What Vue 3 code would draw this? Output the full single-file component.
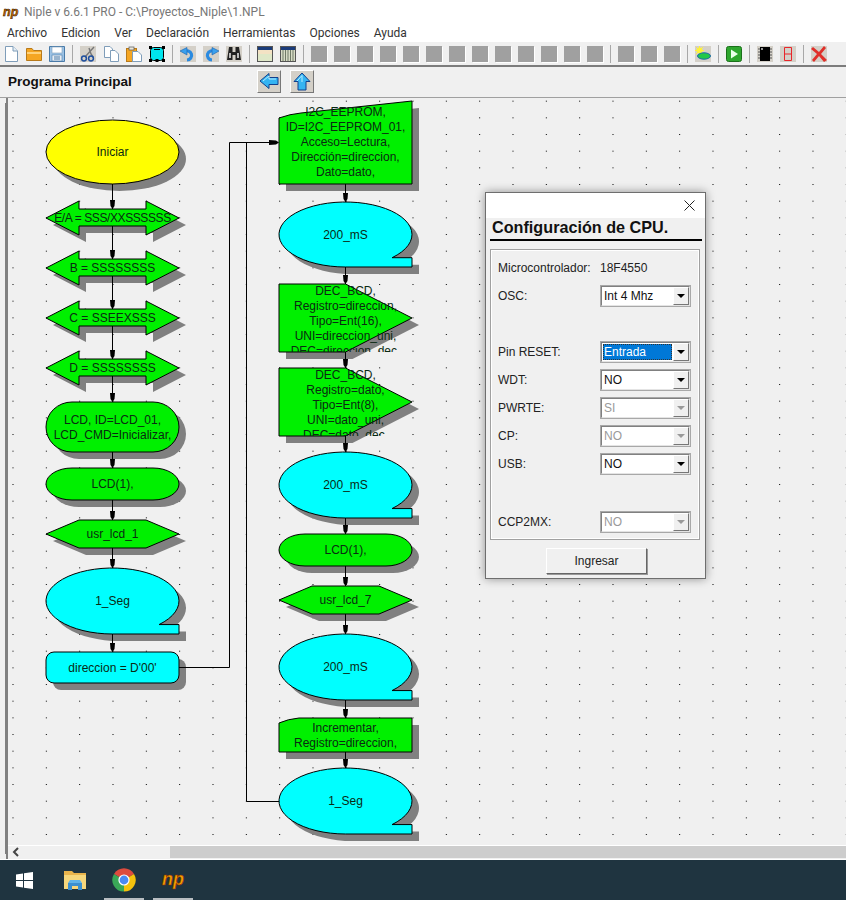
<script setup>
const menus = ['Archivo', 'Edicion', 'Ver', 'Declaración', 'Herramientas', 'Opciones', 'Ayuda']

const gray = n => Array(n).fill('gray')
const tools = [
	'new', 'open', 'save', '|',
	'cut', 'copy', 'paste', 'block', '|',
	'undo', 'redo', 'find', '|',
	'win', 'cols', '|',
	...gray(13), '|',
	...gray(3), '|',
	'weather', '|',
	'play', '|',
	'chip', 'seg', '|',
	'close'
]

const YELLOW = '#ffff00'
const GREEN = '#00f000'
const CYAN = '#00ffff'

// chart coordinates are the same as page coordinates (svg viewBox is offset)
const L = 46
const R = 279
const W = 133

const shapes = [
	{ t: 'ellipse', x: L, y: 120, h: 64, fill: YELLOW, lines: ['Iniciar'] },
	{ t: 'dbl', x: L, y: 201, h: 34, fill: GREEN, tight: true, lines: ['E/A = SSS/XXSSSSSS'] },
	{ t: 'dbl', x: L, y: 251, h: 34, fill: GREEN, lines: ['B = SSSSSSSS'] },
	{ t: 'dbl', x: L, y: 301, h: 34, fill: GREEN, lines: ['C = SSEEXSSS'] },
	{ t: 'dbl', x: L, y: 351, h: 34, fill: GREEN, lines: ['D = SSSSSSSS'] },
	{ t: 'round', x: L, y: 402, h: 50, r: 26, fill: GREEN, lines: ['LCD, ID=LCD_01,', 'LCD_CMD=Inicializar,'] },
	{ t: 'round', x: L, y: 468, h: 32, r: 26, fill: GREEN, lines: ['LCD(1),'] },
	{ t: 'hex', x: L, y: 520, h: 28, fill: GREEN, lines: ['usr_lcd_1'] },
	{ t: 'tail', x: L, y: 568, h: 66, fill: CYAN, lines: ['1_Seg'] },
	{ t: 'round', x: L, y: 652, h: 31, r: 8, fill: CYAN, lines: ["direccion = D'00'"] },

	{ t: 'input', x: R, y: 101, h: 83, cut: 17, slope: true, fill: GREEN, top: 112, lines: ['I2C_EEPROM,', 'ID=I2C_EEPROM_01,', 'Acceso=Lectura,', 'Dirección=direccion,', 'Dato=dato,'] },
	{ t: 'tail', x: R, y: 202, h: 65, fill: CYAN, lines: ['200_mS'] },
	{ t: 'penta', x: R, y: 284, h: 68, fill: GREEN, top: 291, lines: ['DEC_BCD,', 'Registro=direccion,', 'Tipo=Ent(16),', 'UNI=direccion_uni,', 'DEC=direccion_dec,'] },
	{ t: 'penta', x: R, y: 368, h: 68, fill: GREEN, top: 375, lines: ['DEC_BCD,', 'Registro=dato,', 'Tipo=Ent(8),', 'UNI=dato_uni,', 'DEC=dato_dec,'] },
	{ t: 'tail', x: R, y: 452, h: 66, fill: CYAN, lines: ['200_mS'] },
	{ t: 'round', x: R, y: 534, h: 32, r: 26, fill: GREEN, lines: ['LCD(1),'] },
	{ t: 'hex', x: R, y: 586, h: 28, fill: GREEN, lines: ['usr_lcd_7'] },
	{ t: 'tail', x: R, y: 634, h: 66, fill: CYAN, lines: ['200_mS'] },
	{ t: 'input', x: R, y: 718, h: 34, cut: 5, slope: false, fill: GREEN, lines: ['Incrementar,', 'Registro=direccion,'] },
	{ t: 'tail', x: R, y: 768, h: 66, fill: CYAN, lines: ['1_Seg'] }
]

const shapePath = s => {
	const { t, x, y, h } = s
	const r = x + W
	const b = y + h
	const cx = x + W / 2
	const cy = y + h / 2
	if (t === 'ellipse') return `M${x} ${cy}A${W / 2} ${h / 2} 0 1 1 ${r} ${cy}A${W / 2} ${h / 2} 0 1 1 ${x} ${cy}Z`
	if (t === 'dbl') {
		const n = 33
		return `M${x} ${cy}L${x + n} ${y}V${y + 8}H${r - n}V${y}L${r} ${cy}L${r - n} ${b}V${b - 9}H${x + n}V${b}Z`
	}
	if (t === 'hex') return `M${x} ${cy}L${x + 33} ${y}H${r - 33}L${r} ${cy}L${r - 33} ${b}H${x + 33}Z`
	if (t === 'round') {
		const rx = s.r
		const ry = Math.min(s.r, h / 2)
		return `M${x + rx} ${y}H${r - rx}A${rx} ${ry} 0 0 1 ${r} ${y + ry}V${b - ry}A${rx} ${ry} 0 0 1 ${r - rx} ${b}H${x + rx}A${rx} ${ry} 0 0 1 ${x} ${b - ry}V${y + ry}A${rx} ${ry} 0 0 1 ${x + rx} ${y}Z`
	}
	if (t === 'tail') {
		// the tail starts on the ellipse, at 85% of the width
		const ty = cy + (h / 2) * Math.sqrt(1 - 0.7 * 0.7)
		return `M${cx} ${b}A${W / 2} ${h / 2} 0 1 1 ${x + W * 0.85} ${ty}H${r}V${b}Z`
	}
	if (t === 'input') {
		if (s.slope) return `M${x} ${y + s.cut}Q${x + 11} ${y + s.cut - 4} ${x + 22} ${y + s.cut - 5}L${r} ${y}V${b}H${x}Z`
		return `M${x} ${y + s.cut}Q${x + 9} ${y + 1} ${x + 20} ${y}H${r}V${b}H${x}Z`
	}
	return `M${x} ${y}H${cx}L${r} ${cy}L${cx} ${b}H${x}Z`
}

const textY = (s, i) => {
	if (s.top) return s.top + i * 15
	return s.y + s.h / 2 + (i - (s.lines.length - 1) / 2) * 15
}

const links = [
	[112.5, 184, 209], [112.5, 226, 259], [112.5, 276, 309], [112.5, 326, 359],
	[112.5, 376, 402], [112.5, 452, 468], [112.5, 500, 520], [112.5, 548, 568], [112.5, 634, 652],
	[345.5, 184, 202], [345.5, 267, 284], [345.5, 352, 368], [345.5, 436, 452],
	[345.5, 518, 534], [345.5, 566, 586], [345.5, 614, 634], [345.5, 700, 718], [345.5, 752, 768]
]

const arrowDown = (x, y) => `${x - 2.5},${y - 9} ${x + 2.5},${y - 9} ${x + 2},${y - 3} ${x},${y} ${x - 2},${y - 3}`

const combos = [
	{ label: 'Microcontrolador:', text: '18F4550' },
	{ label: 'OSC:', value: 'Int 4 Mhz' },
	{ blank: true },
	{ label: 'Pin RESET:', value: 'Entrada', selected: true },
	{ label: 'WDT:', value: 'NO' },
	{ label: 'PWRTE:', value: 'SI', disabled: true },
	{ label: 'CP:', value: 'NO', disabled: true },
	{ label: 'USB:', value: 'NO' },
	{ blank: true, tall: true },
	{ label: 'CCP2MX:', value: 'NO', disabled: true }
]
</script>

<template>
	<div class="app">
		<!-- shared icons -->
		<svg class="defs" aria-hidden="true">
			<symbol id="i-new" viewBox="0 0 16 16">
				<path d="M2.5 .5H10L14.5 5V15.5H2.5Z" fill="#fff" stroke="#7f9db9" />
				<path d="M10 .5V5H14.5" fill="#e6eef5" stroke="#7f9db9" />
			</symbol>
			<symbol id="i-open" viewBox="0 0 16 16">
				<path d="M.5 2.5H6L7.5 4.5H15.5V14.5H.5Z" fill="#f5a623" stroke="#b87a1a" />
				<path d="M1 6H15V8H1Z" fill="#ffd27a" />
			</symbol>
			<symbol id="i-save" viewBox="0 0 16 16">
				<path d="M.5 .5H15.5V15.5H.5Z" fill="#9dc3e6" stroke="#4a7ba8" />
				<rect x="3" y="1" width="10" height="6" fill="#fff" stroke="#7f9db9" stroke-width=".6" />
				<rect x="3" y="9" width="10" height="6" fill="#e8eef4" stroke="#4a7ba8" stroke-width=".6" />
				<path d="M5 11H11M5 13H11" stroke="#4a7ba8" />
			</symbol>
			<symbol id="i-cut" viewBox="0 0 16 16">
				<rect width="16" height="16" fill="#d4d0c8" />
				<path d="M14 1L5 11M9 2L11 8L13 11" stroke="#777" stroke-width="1.4" fill="none" />
				<circle cx="4" cy="12.5" r="2.4" fill="none" stroke="#1f4f9e" stroke-width="1.5" />
				<circle cx="11" cy="12.5" r="2.4" fill="none" stroke="#1f4f9e" stroke-width="1.5" />
			</symbol>
			<symbol id="i-copy" viewBox="0 0 16 16">
				<path d="M1.5 .5H7L9.5 3V11.5H1.5Z" fill="#fff" stroke="#7f9db9" />
				<path d="M7.5 4.5H12L15.5 8V15.5H7.5Z" fill="#fff" stroke="#7f9db9" />
			</symbol>
			<symbol id="i-paste" viewBox="0 0 16 16">
				<rect x=".5" y="2.5" width="10" height="13" fill="#f5a623" stroke="#b87a1a" />
				<rect x="3" y="1" width="5" height="3" fill="#e9e6da" stroke="#555" stroke-width=".7" />
				<path d="M6.5 5.5H12L15.5 9V15.5H6.5Z" fill="#fff" stroke="#7f9db9" />
			</symbol>
			<symbol id="i-block" viewBox="0 0 16 16">
				<rect x="1.5" y="1.5" width="13" height="13" rx="3" fill="#00e5ee" stroke="#000" />
				<path d="M5 3.5H11" stroke="#000" />
				<rect width="3" height="3" fill="#000" />
				<rect x="13" width="3" height="3" fill="#000" />
				<rect y="13" width="3" height="3" fill="#000" />
				<rect x="13" y="13" width="3" height="3" fill="#000" />
				<rect x="6.5" y="13" width="3" height="3" fill="#000" />
			</symbol>
			<symbol id="i-undo" viewBox="0 0 16 16">
				<rect width="16" height="16" fill="#d4d0c8" />
				<path d="M4 5.5A5 4.6 0 1 1 7 14" fill="none" stroke="#2a8ae0" stroke-width="3.2" />
				<path d="M0 5L7 1.5V9Z" fill="#3aa0ee" stroke="#1c5fa8" stroke-width=".6" />
			</symbol>
			<symbol id="i-redo" viewBox="0 0 16 16">
				<rect width="16" height="16" fill="#d4d0c8" />
				<path d="M12 5.5A5 4.6 0 1 0 9 14" fill="none" stroke="#2a8ae0" stroke-width="3.2" />
				<path d="M16 5L9 1.5V9Z" fill="#3aa0ee" stroke="#1c5fa8" stroke-width=".6" />
			</symbol>
			<symbol id="i-find" viewBox="0 0 16 16">
				<rect width="16" height="16" fill="#d4d0c8" />
				<path d="M3 1H6.5V6H9.5V1H13L15 14H9.5V9H6.5V14H1Z" fill="#222" />
				<path d="M3 7H5V12H3ZM11 7H13V12H11Z" fill="#bbb" />
			</symbol>
			<symbol id="i-win" viewBox="0 0 16 16">
				<rect x=".5" y=".5" width="15" height="15" fill="#dfe8c8" stroke="#555" />
				<rect x="1" y="1" width="14" height="3" fill="#1b3c7a" />
				<rect x="1" y="4" width="14" height="4" fill="#f3e2c4" />
			</symbol>
			<symbol id="i-cols" viewBox="0 0 16 16">
				<rect x=".5" y=".5" width="15" height="15" fill="#d8dcc6" stroke="#555" />
				<rect x="1" y="1" width="14" height="3" fill="#1b3c7a" />
				<path d="M3 4V15M5.5 4V15M8 4V15M10.5 4V15M13 4V15" stroke="#6f7a66" />
			</symbol>
			<symbol id="i-gray" viewBox="0 0 16 16">
				<rect width="16" height="16" fill="#a0a0a0" />
			</symbol>
			<symbol id="i-weather" viewBox="0 0 16 16">
				<rect width="16" height="16" fill="#d4d0c8" />
				<path d="M4.5 0V9M0 4.5H9M1 1L8 8M8 1L1 8" stroke="#fff23a" />
				<circle cx="4.5" cy="4.5" r="3" fill="#fff23a" />
				<ellipse cx="9" cy="10" rx="6.5" ry="3.2" fill="#22c84a" stroke="#1c6aa8" />
			</symbol>
			<symbol id="i-play" viewBox="0 0 16 16">
				<rect x=".5" y=".5" width="15" height="15" rx="2" fill="#2ea62e" stroke="#1a701a" />
				<path d="M5 3.5L12 8L5 12.5Z" fill="#eaffea" />
			</symbol>
			<symbol id="i-chip" viewBox="0 0 16 16">
				<rect width="16" height="16" fill="#d4d0c8" />
				<rect x="3" y="1" width="10" height="14" fill="#000" />
				<path d="M1 3H3M1 6H3M1 9H3M1 12H3M13 3H15M13 6H15M13 9H15M13 12H15" stroke="#555" />
				<circle cx="5" cy="3" r=".9" fill="#ddd" />
			</symbol>
			<symbol id="i-seg" viewBox="0 0 16 16">
				<rect width="16" height="16" fill="#d4d0c8" />
				<path d="M4.5 1.5H11.5V14.5H4.5ZM4.5 8H11.5" fill="none" stroke="#e8252a" />
			</symbol>
			<symbol id="i-close" viewBox="0 0 16 16">
				<rect width="16" height="16" fill="#d4d0c8" />
				<path d="M2 1L8 6L13 0L15 2L10 8L16 14L13 16L8 10L3 16L1 14L6 8L0 3Z" fill="#e0302a" />
			</symbol>
		</svg>

		<!-- title bar -->
		<div class="titlebar">
			<svg class="app-logo" width="17" height="14" viewBox="0 0 17 14">
				<text x="1" y="11" class="np np-small">np</text>
			</svg>
			<span>Niple v 6.6.1 PRO - C:\Proyectos_Niple\1.NPL</span>
		</div>

		<!-- menu -->
		<div class="menubar">
			<span v-for="m in menus" :key="m">{{ m }}</span>
		</div>

		<!-- toolbar -->
		<div class="toolbar">
			<template v-for="(tool, i) in tools" :key="i">
				<span v-if="tool === '|'" class="sep"></span>
				<svg v-else class="tool" :class="{ 'tool-gray': tool === 'gray' }" width="16" height="16">
					<use :href="'#i-' + tool" />
				</svg>
			</template>
		</div>

		<!-- main panel -->
		<div class="panel">
			<div class="panel-head">
				<strong class="panel-title">Programa Principal</strong>
				<button class="nav-btn" type="button">
					<svg width="20" height="18" viewBox="0 0 20 18">
						<path d="M1 9L10 1.5V5.5H19V12.5H10V16.5Z" fill="#35b4f2" stroke="#12408c" />
						<path d="M4 9L10 4V7H17" fill="none" stroke="#b8eeff" />
					</svg>
				</button>
				<button class="nav-btn" type="button">
					<svg width="18" height="19" viewBox="0 0 18 19">
						<path d="M9 1L17 9.5H13V18H5V9.5H1Z" fill="#35b4f2" stroke="#12408c" />
						<path d="M4 9L9 3.5V10" fill="none" stroke="#b8eeff" />
					</svg>
				</button>
			</div>

			<div class="workspace">
				<svg class="canvas" width="838" height="747" viewBox="8 98 838 747">
					<defs>
						<pattern id="dots" x="12.5" y="100.67" width="33.333" height="16.667" patternUnits="userSpaceOnUse">
							<rect width="1" height="1" fill="#000" />
						</pattern>
						<clipPath v-for="(s, i) in shapes" :id="'clip' + i" :key="i">
							<rect :x="s.x - 6" :y="s.y" :width="W + 12" :height="s.h" />
						</clipPath>
					</defs>
					<rect x="8" y="98" width="838" height="747" fill="#f0f0f0" />
					<rect x="8" y="98" width="838" height="747" fill="url(#dots)" />

					<!-- shadows -->
					<path v-for="(s, i) in shapes" :key="'sh' + i" :d="shapePath(s)" transform="translate(7 7)" fill="#808080" />

					<!-- connectors -->
					<path v-for="(l, i) in links" :key="'ln' + i" :d="`M${l[0]} ${l[1]}V${l[2]}`" class="wire" />
					<path d="M178 667.5H229.5V142.5H273M279 801.5H246.5V142.5" class="wire" />

					<!-- shapes -->
					<path v-for="(s, i) in shapes" :key="'sp' + i" :d="shapePath(s)" :fill="s.fill" stroke="#000" stroke-width="1" />

					<!-- arrow heads -->
					<polygon v-for="(l, i) in links" :key="'ar' + i" :points="arrowDown(l[0], l[2])" fill="#000" />
					<polygon points="269,140 269,145 276,144.5 279,142.5 276,140.5" fill="#000" />

					<!-- labels -->
					<g v-for="(s, i) in shapes" :key="'tx' + i" :clip-path="s.top ? `url(#clip${i})` : undefined">
						<text
							v-for="(line, j) in s.lines"
							:key="j"
							class="label"
							:class="{ 'label-tight': s.tight }"
							:x="s.x + W / 2"
							:y="textY(s, j)"
						>{{ line }}</text>
					</g>
				</svg>
				<div class="scrollbar">
					<span class="scroll-left">
						<svg width="8" height="10" viewBox="0 0 8 10"><path d="M6 1L2 5L6 9" fill="none" stroke="#444" stroke-width="2" /></svg>
					</span>
					<span class="scroll-thumb"></span>
				</div>
			</div>
		</div>

		<!-- taskbar -->
		<div class="taskbar">
			<svg class="win-logo" width="17" height="17" viewBox="0 0 17 17">
				<path d="M0 2.4L7 1.4V8H0ZM8 1.2L17 0V8H8ZM0 9H7V15.6L0 14.6ZM8 9H17V17L8 15.8Z" fill="#fff" />
			</svg>
			<svg class="task-folder" width="22" height="20" viewBox="0 0 22 20">
				<path d="M0 1H8L10 3H22V19H0Z" fill="#e9b44c" />
				<path d="M0 5H22V19H0Z" fill="#f6d77c" />
				<path d="M4 13H18V20H14V16H8V20H4Z" fill="#3a8fd0" />
				<path d="M6 10H16L18 13H4Z" fill="#5eb3ea" />
			</svg>
			<svg class="task-chrome" width="24" height="24" viewBox="0 0 24 24">
				<path d="M12 12L2 6A11.6 11.6 0 0 1 22 6Z" fill="#dd4b3e" />
				<path d="M12 12L22 6A11.6 11.6 0 0 1 12 23.6Z" fill="#f4c20d" />
				<path d="M12 12L12 23.6A11.6 11.6 0 0 1 2 6Z" fill="#3aa757" />
				<circle cx="12" cy="12" r="5.6" fill="#fff" />
				<circle cx="12" cy="12" r="4.4" fill="#4a8af4" />
			</svg>
			<svg class="task-np" width="28" height="24" viewBox="0 0 28 24">
				<text x="1" y="17" class="np np-big">np</text>
			</svg>
			<span class="mark mark-chrome"></span>
			<span class="mark mark-np"></span>
		</div>

		<!-- CPU dialog -->
		<div class="dialog">
			<div class="dialog-bar">
				<svg width="11" height="11" viewBox="0 0 11 11"><path d="M.5 .5L10.5 10.5M10.5 .5L.5 10.5" stroke="#222" /></svg>
			</div>
			<div class="dialog-body">
				<h2 class="dialog-title">Configuración de CPU.</h2>
				<div class="dialog-box">
					<template v-for="(c, i) in combos" :key="i">
						<div v-if="c.blank" class="row" :class="{ 'row-tall': c.tall }"></div>
						<div v-else class="row">
							<span class="row-label">{{ c.label }}</span>
							<span v-if="c.text" class="row-text">{{ c.text }}</span>
							<div v-else class="combo" :class="{ 'is-off': c.disabled }">
								<span class="combo-value" :class="{ 'is-sel': c.selected }">{{ c.value }}</span>
								<span class="combo-btn"><i class="caret"></i></span>
							</div>
						</div>
					</template>
				</div>
				<button class="enter-btn" type="button">Ingresar</button>
			</div>
		</div>
	</div>
</template>

<style scoped>
.app {
	position: relative;
	width: 846px;
	height: 900px;
	display: flex;
	flex-direction: column;
	overflow: hidden;
	background: #fff;
	font-family: "Liberation Sans", Arial, sans-serif;
	font-size: 12px;
	color: #111;
}
.defs { position: absolute; width: 0; height: 0; }

/* Window chrome */
.titlebar {
	height: 22px;
	box-sizing: border-box;
	padding: 2px 0 0 2px;
	flex: none;
	display: flex;
	align-items: center;
	gap: 5px;
	font-family: Roboto, sans-serif;
	font-size: 12px;
	color: #777;
}
.menubar {
	height: 20px;
	box-sizing: border-box;
	padding: 2px 0 0 7px;
	flex: none;
	display: flex;
	align-items: center;
	gap: 14px;
	font-family: Roboto, sans-serif;
	font-size: 12px;
	color: #333;
}
.toolbar {
	height: 23px;
	flex: none;
	display: flex;
	align-items: center;
	gap: 7px;
	padding-left: 3px;
	background: #f0f0f0;
}
.tool { flex: none; display: block; }
.tool-gray { box-shadow: 1px 1px 0 #fff; }
.sep { width: 1px; height: 18px; background: #a8a8a8; flex: none; }

/* Panel */
.panel {
	flex: 1;
	min-height: 0;
	display: flex;
	flex-direction: column;
	border-top: 2px solid #7c7c7c;
	background: #f0f0f0;
}
.panel-head {
	height: 31px;
	box-sizing: border-box;
	flex: none;
	display: flex;
	align-items: center;
	padding: 0 0 2px 8px;
	border-bottom: 1px solid #a0a0a0;
}
.panel-title { font-size: 13.5px; color: #111; width: 249px; }
.nav-btn {
	width: 24px;
	height: 23px;
	margin-right: 9px;
	padding: 0;
	display: flex;
	align-items: center;
	justify-content: center;
	background: #d4d0c8;
	border: 1px solid;
	border-color: #fff #777 #777 #fff;
}
.workspace {
	flex: 1;
	min-height: 0;
	display: flex;
	flex-direction: column;
	margin-left: 6px;
	border-left: 2px solid #808080;
	box-shadow: -6px 0 0 -5px #808080;
}
.canvas { display: block; flex: none; }
.wire { fill: none; stroke: #000; stroke-width: 1; }
.label {
	font-family: "Liberation Sans", Arial, sans-serif;
	font-size: 12px;
	fill: #0a2a12;
	text-anchor: middle;
	dominant-baseline: central;
}
.label-tight { letter-spacing: -0.4px; }
.scrollbar {
	height: 13px;
	box-sizing: border-box;
	flex: none;
	display: flex;
	border-top: 1px solid #fff;
	background: #f0f0f0;
}
.scroll-left { width: 162px; display: flex; align-items: center; padding-left: 4px; box-sizing: border-box; }
.scroll-thumb { flex: 1; background: #cdcdcd; }

/* Taskbar */
.taskbar {
	position: relative;
	height: 41px;
	flex: none;
	display: flex;
	align-items: center;
	border-top: 1px solid #fff;
	background: #1f3440;
	box-sizing: border-box;
}
.win-logo { margin-left: 16px; }
.task-folder { margin-left: 31px; }
.task-chrome { margin-left: 26px; }
.task-np { margin-left: 25px; }
.np { font-family: "Liberation Sans", sans-serif; font-weight: 700; font-style: italic; }
.np-small { font-size: 12.5px; fill: #c86a00; stroke: #2a1400; stroke-width: 0.5px; }
.np-big { font-size: 18px; fill: #f5a400; stroke: #8a2a00; stroke-width: 0.6px; }
.mark { position: absolute; bottom: 0; height: 2px; width: 40px; background: #b9bec2; }
.mark-chrome { left: 104px; }
.mark-np { left: 153px; }

/* Dialog */
.dialog {
	position: absolute;
	left: 485px;
	top: 192px;
	width: 221px;
	height: 387px;
	box-sizing: border-box;
	border: 1px solid #6e6e6e;
	background: #f0f0f0;
	box-shadow: 0 0 9px rgba(0, 0, 0, 0.4);
}
.dialog-bar {
	height: 25px;
	display: flex;
	align-items: center;
	justify-content: flex-end;
	padding-right: 10px;
	background: #fff;
}
.dialog-body { padding: 0 3px 0 4px; }
.dialog-title {
	margin: 0;
	height: 21px;
	line-height: 18px;
	padding: 0 0 0 2px;
	font-size: 16.2px;
	font-weight: 700;
	color: #111;
	border-bottom: 2px solid #000;
}
.dialog-box {
	margin: 8px 2px 0 0;
	height: 291px;
	box-sizing: border-box;
	padding: 4px 8px 0 7px;
	border: 1px solid #a0a0a0;
	box-shadow: inset 0 0 0 1px #fff;
}
.row { height: 28px; display: flex; align-items: center; justify-content: space-between; }
.row-tall { height: 30px; }
.row-label { color: #222; white-space: nowrap; }
.row-text { width: 91px; color: #222; }
.combo {
	width: 91px;
	height: 22px;
	box-sizing: border-box;
	display: flex;
	background: #fff;
	border: 2px solid;
	border-color: #808080 #e4e4e4 #e4e4e4 #808080;
	outline: 1px solid #a8a8a8;
	outline-offset: -1px;
}
.combo-value { flex: 1; padding: 0 1px; display: flex; align-items: center; margin: 1px; color: #111; }
.is-sel { background: #0078d7; color: #fff; outline: 1px dotted #333; outline-offset: -1px; }
.combo-btn {
	width: 16px;
	display: flex;
	align-items: center;
	justify-content: center;
	background: #f0f0f0;
	border: 1px solid;
	border-color: #fff #777 #777 #fff;
	box-sizing: border-box;
}
.caret { width: 0; height: 0; border: 4px solid transparent; border-top: 4px solid #000; border-bottom: 0; }
.is-off .combo-value { color: #9a9a9a; }
.is-off .caret { border-top-color: #9a9a9a; }
.enter-btn {
	display: block;
	width: 101px;
	height: 26px;
	margin: 8px 0 0 56px;
	padding: 0;
	background: #f0f0f0;
	border: 1px solid;
	border-color: #fff #666 #666 #fff;
	box-shadow: 1px 1px 0 #999;
	font-family: "Liberation Sans", Arial, sans-serif;
	font-size: 12px;
	color: #222;
}
</style>

<style>
html, body { margin: 0; background: #fff; }
</style>
